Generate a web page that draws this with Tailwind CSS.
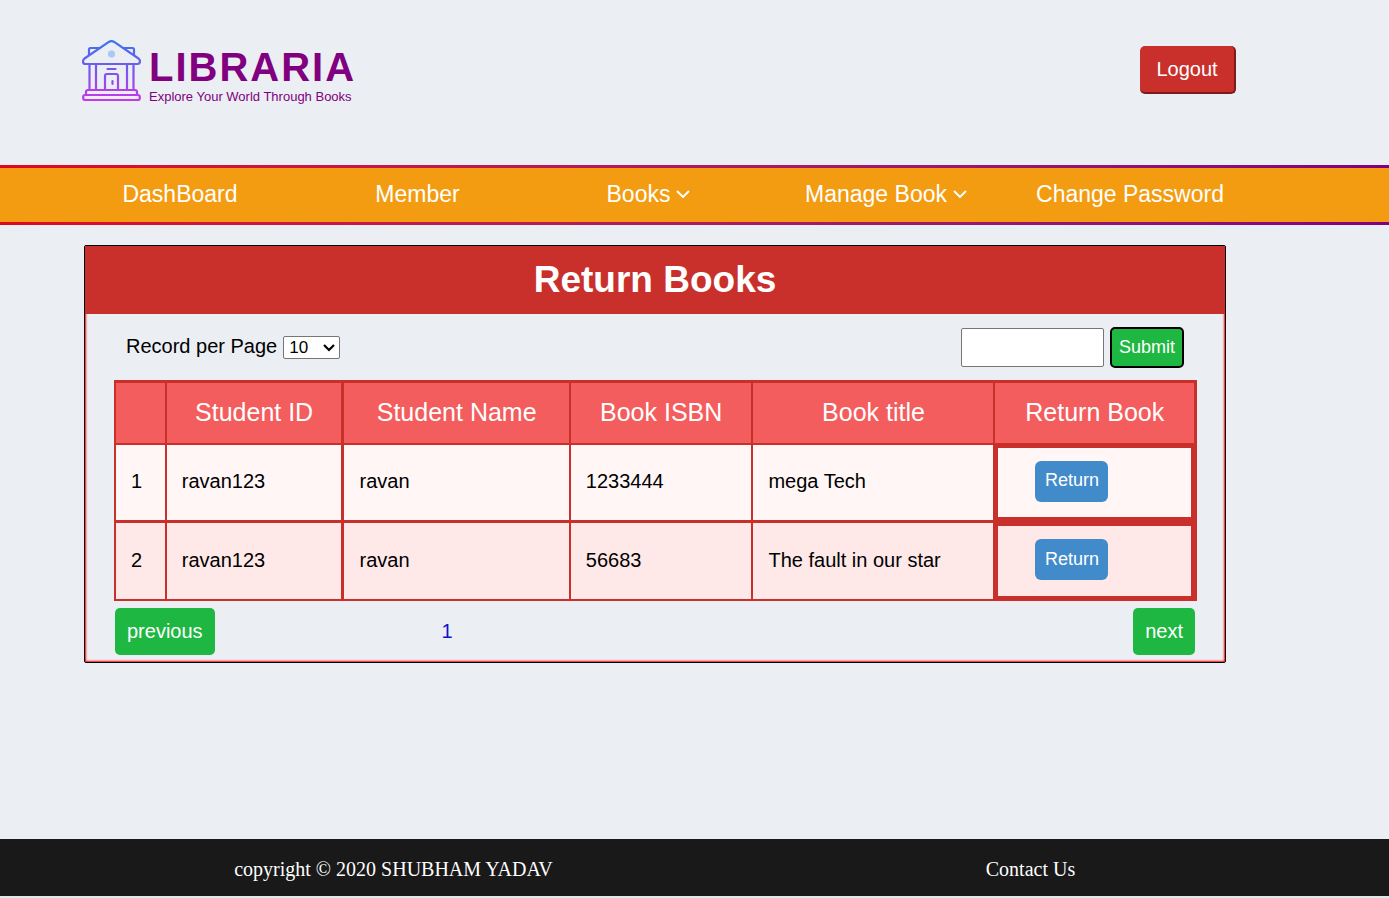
<!DOCTYPE html>
<html lang="en">
<head>
<meta charset="utf-8">
<meta name="viewport" content="width=device-width, initial-scale=1">
<title>Libraria - Return Books</title>
<script src="https://cdn.jsdelivr.net/npm/@tailwindcss/browser@4"></script>
</head>
<body class="flex min-h-screen flex-col bg-[#ebeef3] font-['Liberation_Sans',Arial,sans-serif] text-black">
<header class="flex items-start justify-between pt-10 pr-[153px] pb-[58px] pl-[82px]">
  <a href="#" class="flex items-start gap-2">
    <svg class="h-[62px] w-[59px]" viewBox="0 0 59 62" fill="none" stroke="url(#lg)" stroke-width="2.2" stroke-linejoin="round" stroke-linecap="round" aria-hidden="true">
      <defs>
        <linearGradient id="lg" gradientUnits="userSpaceOnUse" x1="0" y1="0" x2="0" y2="62">
          <stop offset="0" stop-color="#3b74f0"/><stop offset="0.5" stop-color="#7a56ee"/><stop offset="1" stop-color="#cc35ea"/>
        </linearGradient>
      </defs>
      <path d="M18 8H8.500Q7 8 7 9.500V15M41 8H50.500Q52 8 52 9.500V15"/>
      <path d="M26.500 2.200Q29.500 .200 32.500 2.200L56.500 18.500Q58 19.800 58 21.500Q58 24 55.500 24H3.500Q1 24 1 21.500Q1 19.800 2.500 18.500Z"/>
      <path d="M7.500 24V50M14 24V50M45 24V50M51.500 24V50M25.500 29H33.500"/>
      <path d="M23 50V36Q23 34 25 34H34Q36 34 36 36V50M30.500 41V44"/>
      <path d="M6 50H53Q55 50 55 52V55H4V52Q4 50 6 50Z"/>
      <rect x="1.200" y="55" width="56.600" height="5" rx="2"/>
      <circle cx="29.500" cy="14" r="3.600" fill="#a9c8f5" stroke="none"/>
    </svg>
    <span class="flex flex-col pt-[7px] text-[#800080]">
      <span class="text-[40px] leading-10 font-bold tracking-wider">LIBRARIA</span>
      <span class="text-[13px] leading-5">Explore Your World Through Books</span>
    </span>
  </a>
  <button type="button" class="mt-[6px] h-12 w-24 rounded-[5px] border-r-2 border-b-2 border-[#7d1a1a] bg-[#c9302c] text-xl text-white">Logout</button>
</header>

<nav class="bg-linear-to-r from-[#e0061c] to-[#800080] py-[3px]">
  <div class="bg-[#f39c12] pr-[140px] pl-[61px]">
    <ul class="grid h-[54px] grid-cols-[238fr_237fr_225fr_250fr_238fr] items-center justify-items-center pb-[2px] text-[23px] whitespace-nowrap text-white">
      <li><a href="#">DashBoard</a></li>
      <li><a href="#">Member</a></li>
      <li><a href="#" class="flex items-center gap-[6px]">Books
        <svg class="h-2 w-[14px]" viewBox="0 0 14 8" fill="none" stroke="currentColor" stroke-width="2" aria-hidden="true"><path d="M1 1L7 7L13 1"/></svg></a></li>
      <li><a href="#" class="flex items-center gap-[6px]">Manage Book
        <svg class="h-2 w-[14px]" viewBox="0 0 14 8" fill="none" stroke="currentColor" stroke-width="2" aria-hidden="true"><path d="M1 1L7 7L13 1"/></svg></a></li>
      <li><a href="#">Change Password</a></li>
    </ul>
  </div>
</nav>

<main class="grow pt-5 pr-[163px] pl-[84px]">
  <section class="rounded-xs border border-black pb-[7px] shadow-[inset_0_0_2px_1px_#f00]">
    <h1 class="bg-[#c9302c] py-[10px] text-center text-[37px] leading-12 font-bold text-white">Return Books</h1>
    <div class="pr-7 pl-[29px]">
      <div class="flex items-center justify-between pt-[13px] pr-[13px] pb-3 pl-3">
        <div class="flex items-center gap-[6px] text-xl">
          <label for="per-page" class="pb-1">Record per Page</label>
          <span class="grid items-center">
            <select id="per-page" class="col-start-1 row-start-1 h-[23px] w-[57px] appearance-none rounded-xs border border-[#767676] bg-white pl-[5px] text-[17px] leading-5"><option>10</option><option>25</option><option>50</option></select>
            <svg class="pointer-events-none col-start-1 row-start-1 mr-[5px] h-2 w-3 justify-self-end" viewBox="0 0 12 8" fill="none" stroke="currentColor" stroke-width="2.2" aria-hidden="true"><path d="M1 1L6 6L11 1"/></svg>
          </span>
        </div>
        <form class="flex items-center gap-[6px]">
          <input type="text" aria-label="Search" class="h-[39px] w-[143px] rounded-xs border border-[#767676] bg-white px-2">
          <button type="button" class="h-[41px] w-[74px] rounded-[5px] border-2 border-black bg-[#1eb742] pb-[2px] text-lg leading-5 text-white">Submit</button>
        </form>
      </div>
      <table class="w-full table-fixed border-collapse text-xl">
        <colgroup><col class="w-[4.7%]"><col class="w-[16.4%]"><col class="w-[21%]"><col class="w-[16.9%]"><col class="w-[22.4%]"><col class="w-[18.6%]"></colgroup>
        <thead>
          <tr class="h-[62px] bg-[#f45d5d] text-[25px] text-white [&>th]:border-2 [&>th]:border-t-3 [&>th]:border-[#c9302c] [&>th]:font-normal">
            <th></th><th class="border-r-3!">Student ID</th><th>Student Name</th><th>Book ISBN</th><th>Book title</th><th class="border-r-3!">Return Book</th>
          </tr>
        </thead>
        <tbody class="[&_td]:border-2 [&_td]:border-[#c9302c] [&_td]:px-[15px] [&_td]:pb-[2px]">
          <tr class="h-[78px] bg-[#fff6f5] [&>td]:border-b-3!">
            <td>1</td><td class="border-r-3!">ravan123</td><td>ravan</td><td>1233444</td><td>mega Tech</td>
            <td class="border-r-3! shadow-[inset_0_0_0_3px_#c9302c]"><button type="button" class="ml-[25px] h-[41px] w-[73px] rounded-md bg-[#428bca] pb-[2px] text-lg leading-5 text-white">Return</button></td>
          </tr>
          <tr class="h-[78px] bg-[#ffe8e8]">
            <td>2</td><td class="border-r-3!">ravan123</td><td>ravan</td><td>56683</td><td>The fault in our star</td>
            <td class="border-r-3! shadow-[inset_0_0_0_3px_#c9302c]"><button type="button" class="ml-[25px] h-[41px] w-[73px] rounded-md bg-[#428bca] pb-[2px] text-lg leading-5 text-white">Return</button></td>
          </tr>
        </tbody>
      </table>
      <div class="grid grid-cols-[11fr_auto_25fr] items-center pt-[7px] pr-[2px] pl-px text-xl">
        <a href="#" class="justify-self-start rounded-[5px] bg-[#1eb742] px-3 py-[10px] leading-[27px] text-white">previous</a>
        <a href="#" class="text-[#1212c8]">1</a>
        <a href="#" class="justify-self-end rounded-[5px] bg-[#1eb742] px-3 py-[10px] leading-[27px] text-white">next</a>
      </div>
    </div>
  </section>
</main>

<footer class="border-b-2 border-[#dfe7ea] bg-[#191919] font-['Liberation_Serif','Times_New_Roman',serif] text-xl text-white">
  <div class="grid h-[57px] grid-cols-[787fr_487fr_115fr] items-center justify-items-center pt-[2px]">
    <p>copyright © 2020 SHUBHAM YADAV</p>
    <a href="#">Contact Us</a>
  </div>
</footer>
</body>
</html>
